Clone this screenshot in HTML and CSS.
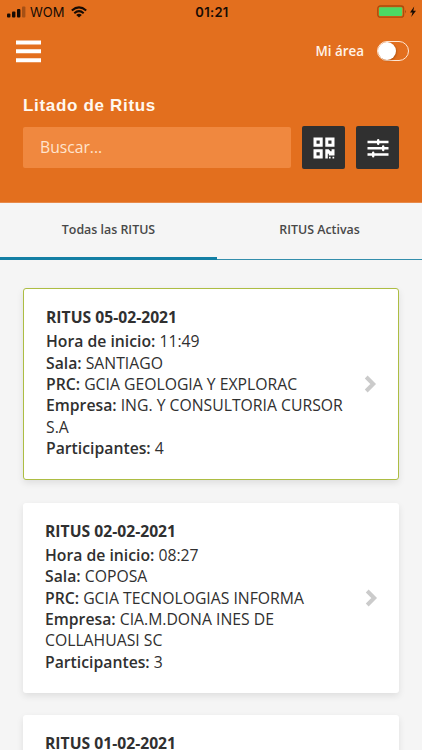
FILE: index.html
```html
<!DOCTYPE html>
<html lang="es">
<head>
<meta charset="utf-8">
<title>Litado de Ritus</title>
<link rel="stylesheet" href="styles.css">
</head>
<body>
<header class="header">
  <div class="status">
    <div class="status-left">
      <svg class="signal" width="19" height="12" viewBox="0 0 19 12"><rect x="0" y="7.6" width="3.4" height="4" rx="1"/><rect x="5" y="5.6" width="3.4" height="6" rx="1"/><rect x="10" y="3" width="3.4" height="8.6" rx="1"/><rect x="15" y="0.5" width="3.4" height="11.1" rx="1" opacity=".3"/></svg>
      <span class="carrier">WOM</span>
      <svg class="wifi" width="16" height="12" viewBox="0 0 16 12"><g fill="none" stroke="#160b04" stroke-width="2"><path d="M.8 4.5Q8-1.8 15.2 4.5"/><path d="M3.3 7.2Q8 3.1 12.7 7.2"/></g><path d="M5.2 8.9Q8 6.7 10.8 8.9L8 11.6Z"/></svg>
    </div>
    <span class="clock">01:21</span>
    <div class="status-right">
      <svg width="41" height="14" viewBox="0 0 41 14"><rect x=".8" y="1" width="25.8" height="11.2" rx="2.5" fill="none" stroke="#a94c0d" stroke-width="1.3"/><rect x="2" y="2.2" width="23.2" height="8.8" rx="1.2" fill="#4cd964"/><path d="M28 4.7Q29.5 6.6 28 8.5Z" fill="#8b400e"/><path d="M37.2 1.6L33 7.5h2.5L34.2 12 39 5.8h-2.7Z" fill="#160b04"/></svg>
    </div>
  </div>
  <div class="topbar">
    <svg class="menu" width="25" height="23" viewBox="0 0 25 23"><path d="M0 2.4h25M0 11.3h25M0 20.2h25" stroke="#fff" stroke-width="4"/></svg>
    <div class="area"><span class="area-label">Mi área</span><span class="toggle"><span class="knob"></span></span></div>
  </div>
  <h1 class="title">Litado de Ritus</h1>
  <div class="search-row">
    <div class="search">Buscar...</div>
    <div class="button">
      <svg width="22" height="22" viewBox="0 0 22 22"><g fill="none" stroke="#fff" stroke-width="3"><path d="M2 2h6.2v6.2H2zM13.8 2H20v6.2h-6.2zM2 13.8h6.2V20H2z"/></g><path d="M12.3 12.3h3.4l1.7 2h1.2v-2h2.9v6.2h-5.7v-1.8h-1v4.8h-2.5zM16 19.8h1.6v1.6H16zM19.5 19.8h1.7v1.6h-1.7z" fill="#fff"/></svg>
    </div>
    <div class="button">
      <svg width="22" height="20" viewBox="0 0 22 20"><path d="M.5 4h21M.5 10.2h21M.5 16.5h21" stroke="#fff" stroke-width="2.4"/><path d="M11.2 2.2v3.6M16.2 8.4V12M6.2 14.7v3.6" stroke="#fff" stroke-width="2.4" stroke-linecap="round"/></svg>
    </div>
  </div>
</header>
<nav class="tabs">
  <div class="tab tab-active"><span class="tab-label">Todas las RITUS</span></div>
  <div class="tab"><span class="tab-label">RITUS Activas</span></div>
</nav>
<main class="list">
  <article class="card card-active">
    <div class="details">
      <h2 class="card-title">RITUS 05-02-2021</h2>
      <p><b>Hora de inicio:</b> 11:49</p>
      <p><b>Sala:</b> SANTIAGO</p>
      <p><b>PRC:</b> GCIA GEOLOGIA Y EXPLORAC</p>
      <p><b>Empresa:</b> ING. Y CONSULTORIA CURSOR<br>S.A</p>
      <p><b>Participantes:</b> 4</p>
    </div>
    <svg class="chevron" width="13" height="18" viewBox="0 0 13 18"><path d="M2.2 2L9.2 9l-7 7" fill="none" stroke="#cbcbcb" stroke-width="4"/></svg>
  </article>
  <article class="card">
    <div class="details">
      <h2 class="card-title">RITUS 02-02-2021</h2>
      <p><b>Hora de inicio:</b> 08:27</p>
      <p><b>Sala:</b> COPOSA</p>
      <p><b>PRC:</b> GCIA TECNOLOGIAS INFORMA</p>
      <p><b>Empresa:</b> CIA.M.DONA INES DE<br>COLLAHUASI SC</p>
      <p><b>Participantes:</b> 3</p>
    </div>
    <svg class="chevron" width="13" height="18" viewBox="0 0 13 18"><path d="M2.2 2L9.2 9l-7 7" fill="none" stroke="#cbcbcb" stroke-width="4"/></svg>
  </article>
  <article class="card">
    <div class="details"><h2 class="card-title">RITUS 01-02-2021</h2></div>
  </article>
</main>
</body>
</html>
```

FILE: styles.css
```css
* { box-sizing: border-box; }
html { height: 750px; overflow: hidden; }
body { margin: 0; height: 750px; overflow: hidden; background: #f5f5f5; color: #303030; font-family: "Open Sans", sans-serif; }
svg { display: block; flex: none; }
.header { height: 203px; background: #e36f1e; border-bottom: 1px solid #e88a4a; }
.status { height: 24px; display: grid; grid-template-columns: 1fr auto 1fr; align-items: center; color: #160b04; font-family: Inter, sans-serif; }
.status-left { display: flex; align-items: center; padding-left: 7px; fill: #160b04; }
.signal { margin-top: -1px; }
.carrier { margin-left: 4px; width: 35px; font-size: 13px; line-height: 16px; white-space: nowrap; }
.wifi { margin-left: 6px; }
.clock { padding-left: 2px; font-size: 13px; font-weight: 600; letter-spacing: .3px; }
.status-right { display: flex; justify-content: flex-end; padding-right: 4px; }
.topbar { height: 54px; padding: 0 13px 0 16px; display: flex; align-items: center; justify-content: space-between; }
.area { display: flex; align-items: center; gap: 13px; color: #fff3e8; }
.area-label { font-size: 13.4px; font-weight: 600; }
.toggle { width: 32px; height: 20px; border: 1px solid #ffe7d4; border-radius: 10px; }
.knob { display: block; width: 18px; height: 18px; border-radius: 50%; background: #fff; box-shadow: 1px 1px 2px #7b340066; }
.title { margin: 18px 0 0 23px; height: 20px; line-height: 20px; color: #fff8ef; font-family: "Liberation Sans", sans-serif; font-size: 17px; font-weight: 700; letter-spacing: .68px; }
.search-row { margin: 10px 23px 0; display: flex; align-items: center; }
.search { width: 269px; height: 41px; margin-right: 11px; padding-left: 17px; line-height: 41px; border-radius: 2px; background: #f0883f; color: #ffe4ce; font-size: 15.7px; }
.button { width: 43px; height: 43px; display: flex; align-items: center; justify-content: center; border-radius: 2px; background: #303030; }
.button + .button { margin-left: 11px; }
.tabs { height: 57px; display: grid; grid-template-columns: 217px 205px; }
.tab { display: flex; align-items: center; justify-content: center; padding-bottom: 3px; border-bottom: 1px solid #338eac; color: #484848; font-size: 12.4px; font-weight: 600; }
.tab-active { padding-bottom: 1px; border-bottom: 3px solid #137fa4; }
.list { padding: 28px 23px 0; display: grid; gap: 22.5px; }
.card { height: 190px; padding: 17px 0 0 22px; display: flex; justify-content: space-between; border-radius: 3px; background: #fff; box-shadow: 0 3px 7px #00000018; }
.card-active { height: 192px; border: 1px solid #adbd43; }
.details { font-size: 15.75px; line-height: 21.35px; white-space: nowrap; }
.details p { margin: 0; }
.details b { font-weight: 600; }
.card-title { margin: 0 0 3.4px; font-size: 15.7px; line-height: 22px; font-weight: 700; }
.chevron { align-self: center; margin: -17px 21px 0 0; }
```
